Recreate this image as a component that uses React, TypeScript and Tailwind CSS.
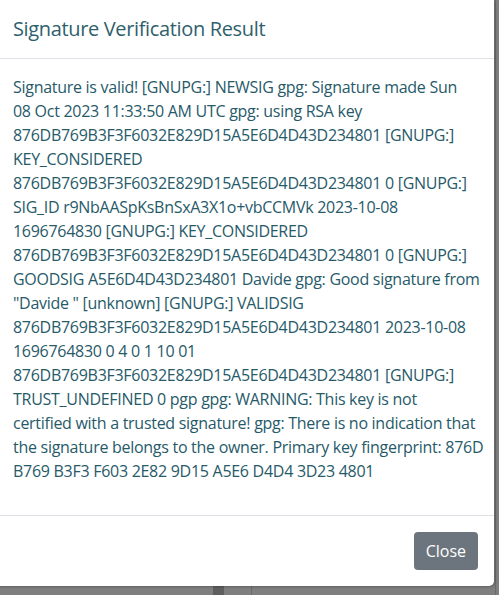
const lines = [
  "Signature is valid! [GNUPG:] NEWSIG gpg: Signature made Sun",
  "08 Oct 2023 11:33:50 AM UTC gpg: using RSA key",
  "876DB769B3F3F6032E829D15A5E6D4D43D234801 [GNUPG:]",
  "KEY_CONSIDERED",
  "876DB769B3F3F6032E829D15A5E6D4D43D234801 0 [GNUPG:]",
  "SIG_ID r9NbAASpKsBnSxA3X1o+vbCCMVk 2023-10-08",
  "1696764830 [GNUPG:] KEY_CONSIDERED",
  "876DB769B3F3F6032E829D15A5E6D4D43D234801 0 [GNUPG:]",
  "GOODSIG A5E6D4D43D234801 Davide gpg: Good signature from",
  "\"Davide \" [unknown] [GNUPG:] VALIDSIG",
  "876DB769B3F3F6032E829D15A5E6D4D43D234801 2023-10-08",
  "1696764830 0 4 0 1 10 01",
  "876DB769B3F3F6032E829D15A5E6D4D43D234801 [GNUPG:]",
  "TRUST_UNDEFINED 0 pgp gpg: WARNING: This key is not",
  "certified with a trusted signature! gpg: There is no indication that",
  "the signature belongs to the owner. Primary key fingerprint: 876D",
  "B769 B3F3 F603 2E82 9D15 A5E6 D4D4 3D23 4801",
];

export default function App() {
  return (
    <div className="relative flex h-[595px] w-[499px] overflow-hidden bg-[#7f7f7f] font-['Open_Sans',sans-serif]">
      {/* page behind the backdrop */}
      <div className="absolute right-0 top-0 h-full w-[4px] border-l border-[#6a6a6a]" />
      <div className="absolute bottom-0 left-[213px] h-[9px] w-[11px] bg-[#5f5f5f]" />
      <div className="absolute bottom-0 left-[251px] h-[9px] w-px bg-[#6a6a6a]" />

      <div className="relative -ml-[3px] flex h-[586px] w-[497px] flex-col rounded-br-[5px] bg-white shadow-[1px_1px_3px_rgba(0,0,0,0.25)]">
        <div className="flex h-[59px] items-center border-b border-[#dee2e6] px-4">
          <h5 className="text-[20px] leading-[26px] tracking-[-0.35px] text-[#2f5f6d]">Signature Verification Result</h5>
        </div>

        <div className="px-4 pt-4">
          <p className="mb-4 text-[16px] leading-[24px] tracking-[-0.28px] text-[#275a69]">
            {lines.map((line) => (
              <span key={line} className="block whitespace-nowrap">
                {line}
              </span>
            ))}
          </p>
        </div>

        <div className="mt-auto flex justify-end border-t border-[#dee2e6] px-3 py-3">
          <button className="m-1 h-[38px] rounded-[4px] bg-[#6c757d] px-3 text-[16px] text-white">
            Close
          </button>
        </div>
      </div>
    </div>
  );
}
